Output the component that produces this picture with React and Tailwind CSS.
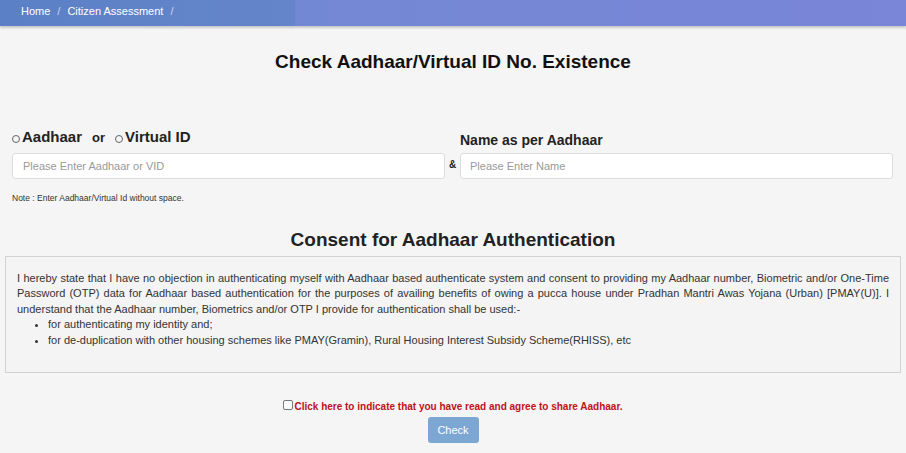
export default function App() {
  return (
    <div className="min-h-[453px] bg-[#f5f5f5] font-['Liberation_Sans',Arial,sans-serif] text-[#222]">
      <div className="h-[26px] flex bg-gradient-to-r from-[#6f88d2] to-[#7a86d8] shadow-[0_2px_2px_rgba(0,0,0,0.18)]">
        <div className="w-[295px] h-full bg-gradient-to-r from-[#5b80c6] to-[#6585ca] flex items-center pb-[3px] pl-[21px] text-[11px] text-white">
          <span>Home</span>
          <span className="mx-[7px] text-[#c9d4ee]">/</span>
          <span>Citizen Assessment</span>
          <span className="mx-[7px] text-[#c9d4ee]">/</span>
        </div>
      </div>

      <h1 className="mt-[22px] text-center text-[19px] font-bold text-[#111]">Check Aadhaar/Virtual ID No. Existence</h1>

      <div className="mt-[50px] flex px-[12px]">
        <div className="w-[433px]">
          <div className="flex items-end text-[15px] font-bold text-[#222] h-[22px]">
            <span className="w-[8px] h-[8px] border border-[#666] rounded-full mr-[2px] mb-[6px]"></span>
            <span>Aadhaar</span>
            <span className="text-[13px] mx-[10px] mb-[1px]">or</span>
            <span className="w-[8px] h-[8px] border border-[#666] rounded-full mr-[2px] mb-[6px]"></span>
            <span>Virtual ID</span>
          </div>
          <input
            className="mt-[4px] w-full h-[26px] bg-white border border-[#dcdcdc] rounded-[3px] px-[10px] text-[11px] placeholder:text-[#999] outline-none"
            placeholder="Please Enter Aadhaar or VID"
          />
        </div>
        <div className="w-[15px] flex items-end justify-center pb-[7px] text-[10px] font-bold">&amp;</div>
        <div className="w-[433px]">
          <div className="h-[22px] flex items-end text-[14px] font-bold text-[#222]">
            <span className="mb-[-2px]">Name as per Aadhaar</span>
          </div>
          <input
            className="mt-[4px] w-full h-[26px] bg-white border border-[#dcdcdc] rounded-[3px] px-[9px] text-[11px] placeholder:text-[#999] outline-none"
            placeholder="Please Enter Name"
          />
        </div>
      </div>

      <p className="mt-[13px] px-[12px] text-[8.5px] text-[#333]">Note : Enter Aadhaar/Virtual Id without space.</p>

      <h2 className="mt-[22px] text-center text-[19px] font-bold text-[#222]">Consent for Aadhaar Authentication</h2>

      <div className="mx-[5px] mt-[1px] h-[117px] border border-[#d2d2d2] bg-[#f4f4f4] px-[11px] pt-[14px] text-[11px] leading-[15.5px] text-[#333]">
        <p className="text-justify">
          I hereby state that I have no objection in authenticating myself with Aadhaar based authenticate system and consent to providing my Aadhaar number, Biometric and/or One-Time Password (OTP) data for Aadhaar based authentication for the purposes of availing benefits of owing a pucca house under Pradhan Mantri Awas Yojana (Urban) [PMAY(U)]. I understand that the Aadhaar number, Biometrics and/or OTP I provide for authentication shall be used:-
        </p>
        <ul className="list-disc pl-[31px]">
          <li>for authenticating my identity and;</li>
          <li>for de-duplication with other housing schemes like PMAY(Gramin), Rural Housing Interest Subsidy Scheme(RHISS), etc</li>
        </ul>
      </div>

      <div className="mt-[26px] flex justify-center items-center text-[10px] font-bold text-[#c0101a]">
        <span className="w-[10px] h-[10px] border border-[#777] rounded-[2px] bg-white mr-[1px] mb-[3px]"></span>
        <span>Click here to indicate that you have read and agree to share Aadhaar.</span>
      </div>

      <div className="mt-[3px] flex justify-center">
        <button className="w-[51px] h-[26px] rounded-[3px] bg-[#7ba7d2] text-white text-[11px]">Check</button>
      </div>
    </div>
  );
}
